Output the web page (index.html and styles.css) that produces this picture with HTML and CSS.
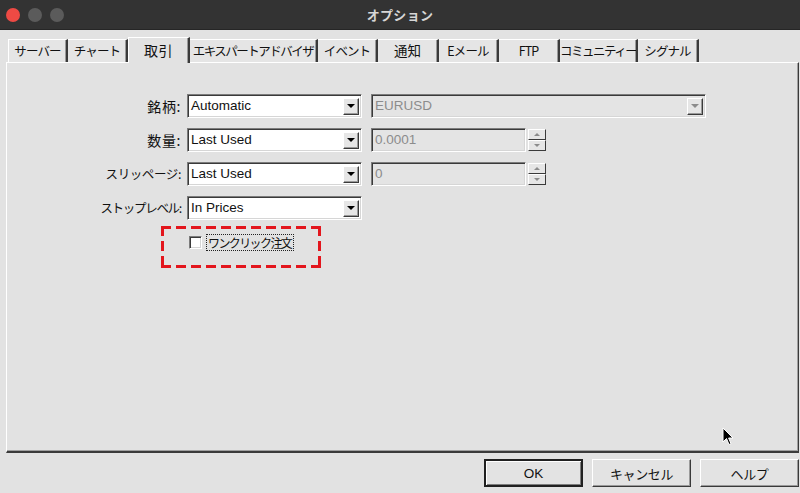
FILE: index.html
```html
<!DOCTYPE html>
<html lang="ja">
<head>
<meta charset="utf-8">
<title>オプション</title>
<link rel="stylesheet" href="styles.css">
</head>
<body>
<div class="window">
  <header class="titlebar">
    <div class="lights">
      <span class="light red"></span>
      <span class="light"></span>
      <span class="light"></span>
    </div>
    <div class="title">オプション</div>
  </header>

  <nav class="tabs">
    <div class="tab first w60">サーバー</div>
    <div class="tab w60">チャート</div>
    <div class="tab active w62">取引</div>
    <div class="tab w128 tight">エキスパートアドバイザ</div>
    <div class="tab w60">イベント</div>
    <div class="tab w61 kanji-tab">通知</div>
    <div class="tab w60">Eメール</div>
    <div class="tab w61">FTP</div>
    <div class="tab w78 tight">コミュニティー</div>
    <div class="tab w61">シグナル</div>
  </nav>

  <main class="panel">
    <div class="row">
      <label class="lbl kanji">銘柄:</label>
      <div class="select w175"><span class="val">Automatic</span><span class="drop"><i class="tri"></i></span></div>
      <div class="select disabled w335"><span class="val">EURUSD</span><span class="drop"><i class="tri"></i></span></div>
    </div>
    <div class="row">
      <label class="lbl kanji">数量:</label>
      <div class="select w175"><span class="val">Last Used</span><span class="drop"><i class="tri"></i></span></div>
      <div class="field disabled w155"><span class="val">0.0001</span></div>
      <div class="spin"><span class="sbtn"><i class="tri up"></i></span><span class="sbtn"><i class="tri"></i></span></div>
    </div>
    <div class="row">
      <label class="lbl">スリッページ:</label>
      <div class="select w175"><span class="val">Last Used</span><span class="drop"><i class="tri"></i></span></div>
      <div class="field disabled w155"><span class="val">0</span></div>
      <div class="spin"><span class="sbtn"><i class="tri up"></i></span><span class="sbtn"><i class="tri"></i></span></div>
    </div>
    <div class="row">
      <label class="lbl narrow">ストップレベル:</label>
      <div class="select w175"><span class="val">In Prices</span><span class="drop"><i class="tri"></i></span></div>
    </div>
    <div class="highlight">
      <span class="check"></span>
      <span class="check-label">ワンクリック注文</span>
    </div>
    <svg class="cursor" width="12" height="19" viewBox="0 0 12 19"><path d="M1 1 L1 15 L4.5 11.5 L7 17.5 L9 16.7 L6.6 11 L11 11 Z" fill="#000" stroke="#fff" stroke-width="1"/></svg>
  </main>

  <footer class="buttons">
    <button class="btn default">OK</button>
    <button class="btn">キャンセル</button>
    <button class="btn">ヘルプ</button>
  </footer>
</div>
</body>
</html>
```

FILE: styles.css
```css
* { box-sizing: border-box; }

html, body {
  margin: 0;
  padding: 0;
}

body {
  width: 800px;
  height: 493px;
  overflow: hidden;
  background: #e2e2e2;
  font-family: "Liberation Sans", "Noto Sans CJK JP", sans-serif;
  font-size: 13.5px;
  color: #111;
}

.window {
  width: 800px;
  height: 493px;
  display: flex;
  flex-direction: column;
}

/* title bar */
.titlebar {
  height: 30px;
  flex: none;
  background: #333333;
  border-bottom: 1px solid #262626;
  display: flex;
  align-items: center;
  padding-left: 6px;
}

.lights {
  display: flex;
  gap: 8px;
  width: 66px;
}

.light {
  width: 14px;
  height: 14px;
  border-radius: 50%;
  background: #5b5b5b;
}

.light.red { background: #ee4a44; }

.title {
  flex: 1;
  text-align: center;
  color: #d6d6d6;
  font-family: "Noto Sans CJK JP", sans-serif;
  font-weight: bold;
  font-size: 13px;
  padding-right: 72px;
  letter-spacing: 0.3px;
}

/* tabs */
.tabs {
  flex: none;
  height: 25px;
  margin-top: 7px;
  padding-left: 8px;
  display: flex;
  align-items: flex-end;
}

.tab {
  height: 23px;
  background: #e5e5e5;
  border-top: 1px solid #ffffff;
  border-right: 2px solid #3a3a3a;
  box-shadow: inset -1px 0 0 #9a9a9a;
  font-family: "Noto Sans CJK JP", sans-serif;
  font-size: 12.5px;
  letter-spacing: -0.9px;
  line-height: 21px;
  text-align: center;
  white-space: nowrap;
  overflow: hidden;
  color: #111;
}

.tab.tight { letter-spacing: -1.5px; font-size: 12.5px; }
.tab.kanji-tab { font-size: 13.5px; letter-spacing: 0; }

.tab.first { border-left: 1px solid #ffffff; }

.tab.active {
  height: 26px;
  margin-bottom: -1px;
  position: relative;
  z-index: 1;
  background: #e2e2e2;
  border-left: 1px solid #ffffff;
  font-size: 14px;
  line-height: 24px;
  letter-spacing: 0.5px;
}

.w60 { width: 60px; }
.w61 { width: 61px; }
.w62 { width: 62px; }
.w78 { width: 78px; }
.w128 { width: 128px; }

/* panel */
.panel {
  flex: none;
  position: relative;
  margin-left: 6px;
  width: 793px;
  height: 391px;
  border-top: 1px solid #ffffff;
  border-left: 1px solid #ffffff;
  border-right: 1px solid #3a3a3a;
  border-bottom: 2px solid #3a3a3a;
  box-shadow: inset -1px -1px 0 #a0a0a0;
  padding-top: 31px;
  display: flex;
  flex-direction: column;
  gap: 10px;
}

.row {
  display: flex;
  align-items: flex-start;
  height: 24px;
}

.lbl {
  width: 174px;
  margin-right: 6px;
  text-align: right;
  font-family: "Noto Sans CJK JP", sans-serif;
  font-size: 12.5px;
  letter-spacing: -0.4px;
  line-height: 24px;
  color: #111;
}

.lbl.kanji {
  font-size: 14px;
  letter-spacing: 0.6px;
}

.lbl.narrow {
  letter-spacing: -1.3px;
}

.select, .field {
  height: 24px;
  background: #ffffff;
  border: 1px solid;
  border-color: #7c7c7c #ffffff #ffffff #7c7c7c;
  box-shadow: inset 1px 1px 0 #3a3a3a, inset -1px -1px 0 #d6d6d6;
  display: flex;
  align-items: center;
  margin-right: 9px;
}

.w175 { width: 175px; }
.w335 { width: 335px; }
.w155 { width: 155px; margin-right: 2px; }

.val {
  flex: 1;
  padding-left: 3px;
  white-space: nowrap;
  line-height: 20px;
}

.disabled {
  background: #e4e4e4;
}

.disabled .val { color: #8c8c8c; }

.drop {
  width: 16px;
  height: 17px;
  margin-right: 2px;
  background: #e6e6e6;
  border: 1px solid;
  border-color: #ffffff #3a3a3a #3a3a3a #ffffff;
  box-shadow: inset -1px -1px 0 #9a9a9a;
  display: flex;
  align-items: center;
  justify-content: center;
}

.tri {
  display: block;
  width: 0;
  height: 0;
  border-left: 4px solid transparent;
  border-right: 4px solid transparent;
  border-top: 4px solid #000;
}

.tri.up {
  border-top: 0;
  border-bottom: 4px solid #000;
}

.disabled .tri { border-top-color: #8c8c8c; }

.spin {
  margin-top: 1px;
  width: 18px;
  display: flex;
  flex-direction: column;
}

.sbtn {
  height: 11px;
  background: #e6e6e6;
  border: 1px solid;
  border-color: #ffffff #3a3a3a #3a3a3a #ffffff;
  display: flex;
  align-items: center;
  justify-content: center;
}

.sbtn .tri {
  border-left-width: 3px;
  border-right-width: 3px;
  border-top-color: #8c8c8c;
  border-top-width: 3px;
}

.sbtn .tri.up {
  border-top-width: 0;
  border-bottom: 3px solid #8c8c8c;
}

/* dashed highlight around the checkbox */
.highlight {
  margin-top: -4px;
  margin-left: 154px;
  width: 160px;
  height: 42px;
  padding: 9px 0 0 28px;
  display: flex;
  align-items: flex-start;
  align-self: flex-start;
  gap: 5px;
  background:
    linear-gradient(90deg, #e3161d 10px, transparent 0) left top / 15px 3px repeat-x,
    linear-gradient(90deg, #e3161d 10px, transparent 0) left bottom / 15px 3px repeat-x,
    linear-gradient(180deg, #e3161d 10px, transparent 0) left top / 3px 15px repeat-y,
    linear-gradient(180deg, #e3161d 10px, transparent 0) right top / 3px 15px repeat-y;
}

.check {
  margin-top: 1px;
  width: 13px;
  height: 13px;
  background: #ffffff;
  border: 1px solid;
  border-color: #7c7c7c #ffffff #ffffff #7c7c7c;
  box-shadow: inset 1px 1px 0 #3a3a3a, inset -1px -1px 0 #d6d6d6;
}

.check-label {
  font-family: "Noto Sans CJK JP", sans-serif;
  font-size: 12px;
  letter-spacing: -1.6px;
  line-height: 15px;
  outline: 1px dotted #222;
  padding: 0 2px 0 1px;
}

.cursor {
  position: absolute;
  left: 715px;
  top: 364px;
}

/* buttons */
.buttons {
  flex: 1;
  display: flex;
  justify-content: flex-end;
  align-items: flex-start;
  padding-top: 6px;
  padding-right: 1px;
  gap: 9px;
}

.btn {
  width: 99px;
  height: 28px;
  margin: 0;
  padding: 0;
  background: #e3e3e3;
  border: 1px solid;
  border-color: #ffffff #3a3a3a #3a3a3a #ffffff;
  box-shadow: inset -1px -1px 0 #9a9a9a;
  font-family: "Liberation Sans", "Noto Sans CJK JP", sans-serif;
  font-size: 13px;
  letter-spacing: -0.4px;
  color: #111;
}

.btn.default {
  border: 2px solid #202020;
  box-shadow: inset 1px 1px 0 #ffffff, inset -1px -1px 0 #7c7c7c;
  font-size: 13.5px;
  letter-spacing: 0;
}
```
